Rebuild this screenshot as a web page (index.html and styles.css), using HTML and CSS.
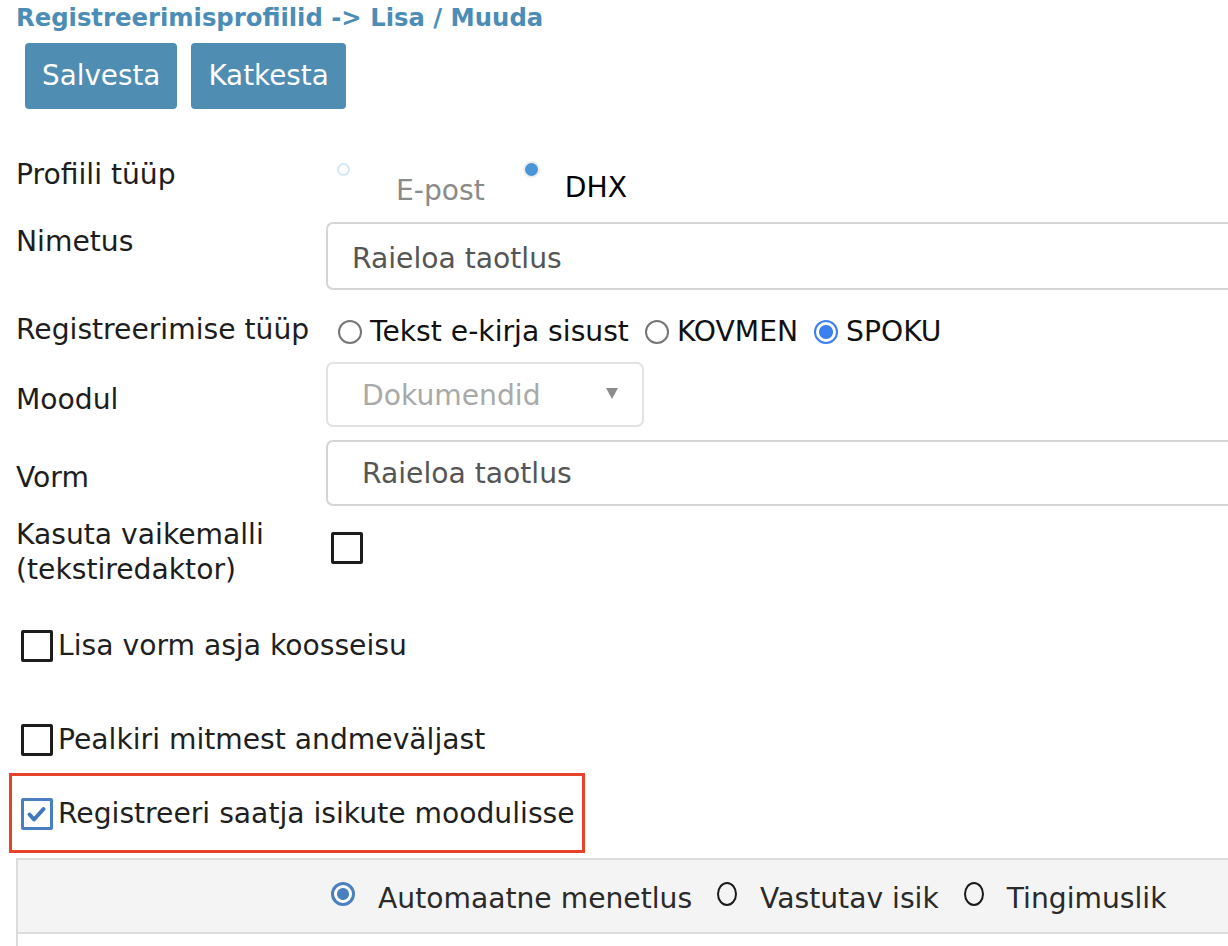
FILE: index.html
```html
<!DOCTYPE html>
<html lang="et">
<head>
<meta charset="utf-8">
<title>Registreerimisprofiilid</title>
<link rel="stylesheet" href="styles.css">
</head>
<body>
<div class="page">
  <h1 class="title">Registreerimisprofiilid -&gt; Lisa / Muuda</h1>
  <div class="actions">
    <button class="btn">Salvesta</button>
    <button class="btn">Katkesta</button>
  </div>

  <div class="row row-profile">
    <div class="label">Profiili tüüp</div>
    <div class="value profile-types">
      <div class="ptype ptype-epost">
        <span class="mini-radio"></span>
        <span class="ptype-text muted">E-post</span>
      </div>
      <div class="ptype ptype-dhx">
        <span class="mini-radio mini-radio-on"></span>
        <span class="ptype-text">DHX</span>
      </div>
    </div>
  </div>

  <div class="row row-name">
    <div class="label label-top">Nimetus</div>
    <div class="value">
      <div class="field field-name">Raieloa taotlus</div>
    </div>
  </div>

  <div class="row row-regtype">
    <div class="label">Registreerimise tüüp</div>
    <div class="value radios">
      <span class="radio"></span><span class="radio-text">Tekst e-kirja sisust</span>
      <span class="radio gap"></span><span class="radio-text">KOVMEN</span>
      <span class="radio radio-on gap"></span><span class="radio-text">SPOKU</span>
    </div>
  </div>

  <div class="row row-module">
    <div class="label label-mid">Moodul</div>
    <div class="value">
      <div class="select">
        <span class="select-text">Dokumendid</span>
        <span class="select-arrow"></span>
      </div>
    </div>
  </div>

  <div class="row row-form">
    <div class="label label-mid">Vorm</div>
    <div class="value">
      <div class="field field-form">Raieloa taotlus</div>
    </div>
  </div>

  <div class="row row-template">
    <div class="label">Kasuta vaikemalli (tekstiredaktor)</div>
    <div class="value">
      <span class="checkbox checkbox-inline"></span>
    </div>
  </div>

  <div class="check-row check-row-first">
    <span class="checkbox"></span><span class="check-text">Lisa vorm asja koosseisu</span>
  </div>

  <div class="check-row check-row-second">
    <span class="checkbox"></span><span class="check-text">Pealkiri mitmest andmeväljast</span>
  </div>

  <div class="highlight">
    <div class="check-row">
      <span class="checkbox checkbox-on">
        <svg width="26" height="26" viewBox="0 0 26 26"><path d="M5.5 13.5 L10 18.5 L19.5 8" fill="none" stroke="#3f78bd" stroke-width="4" stroke-linecap="round" stroke-linejoin="round"/></svg>
      </span><span class="check-text">Registreeri saatja isikute moodulisse</span>
    </div>
  </div>

  <div class="panel">
    <div class="panel-spacer"></div>
    <div class="panel-radios">
      <span class="pradio pradio-on"></span><span class="pradio-text">Automaatne menetlus</span>
      <span class="pradio"></span><span class="pradio-text">Vastutav isik</span>
      <span class="pradio"></span><span class="pradio-text">Tingimuslik</span>
    </div>
  </div>
  <div class="panel-body"></div>
</div>
</body>
</html>
```

FILE: styles.css
```css
html, body {
  margin: 0;
  padding: 0;
  background: #ffffff;
  overflow: hidden;
}

body {
  font-family: "DejaVu Sans", Verdana, sans-serif;
  font-size: 28.2px;
  line-height: 35px;
  color: #1d1d1d;
  width: 1228px;
  height: 946px;
}

.page {
  padding-left: 16px;
}

.title {
  margin: 0;
  padding-top: 4px;
  font-size: 24.3px;
  line-height: 28px;
  font-weight: bold;
  color: #4b8db6;
}

.actions {
  display: flex;
  gap: 14px;
  margin-top: 11px;
  padding-left: 9px;
}

.btn {
  height: 66px;
  padding: 0 17px;
  border: none;
  border-radius: 4px;
  background: #4f8db3;
  color: #ffffff;
  font-family: "DejaVu Sans", Verdana, sans-serif;
  font-size: 27.8px;
  line-height: 66px;
}

.row {
  display: grid;
  grid-template-columns: 310px 1fr;
  align-items: start;
}

.label {
  line-height: 35px;
  color: #1d1d1d;
}

.label-top {
  padding-top: 2px;
}

.label-mid {
  padding-top: 20px;
}

.value {
  min-width: 0;
}

/* Profile type */
.row-profile {
  margin-top: 48px;
}

.profile-types {
  display: flex;
  align-items: flex-start;
}

.ptype {
  display: flex;
  align-items: flex-start;
}

.ptype-epost {
  margin-left: 11px;
}

.ptype-dhx {
  margin-left: 40px;
}

.mini-radio {
  width: 13px;
  height: 13px;
  margin-top: 6px;
  box-sizing: border-box;
  border-radius: 50%;
  border: 2px solid #d3e6f6;
  background: #ffffff;
  flex: none;
}

.mini-radio-on {
  border: none;
  background: #4a95d6;
  box-shadow: 0 0 0 2px #eeeeee;
}

.ptype-epost .ptype-text {
  margin-left: 46px;
  padding-top: 16px;
}

.ptype-dhx .ptype-text {
  margin-left: 27px;
  padding-top: 13px;
  color: #000000;
}

.muted {
  color: #8a8a8a;
}

/* Inputs */
.row-name {
  margin-top: 14px;
}

.field {
  width: 940px;
  box-sizing: border-box;
  border: 2px solid #d4d4d4;
  border-radius: 7px;
  color: #555555;
  display: flex;
  align-items: center;
}

.field-name {
  height: 68px;
  padding-left: 24px;
  padding-top: 4px;
}

.field-form {
  height: 66px;
  padding-left: 34px;
}

/* Registration type radios */
.row-regtype {
  margin-top: 22px;
}

.radios {
  display: flex;
  align-items: center;
  padding-left: 12px;
  padding-top: 2px;
  color: #111111;
}

.radio {
  width: 24px;
  height: 24px;
  box-sizing: border-box;
  border-radius: 50%;
  border: 2px solid #767676;
  background: #ffffff;
  flex: none;
}

.radio.gap {
  margin-left: 16px;
}

.radio-on {
  border: 2px solid #3b7ff0;
  background: radial-gradient(circle, #3b7ff0 0 6.5px, #ffffff 7.5px);
}

.radio-text {
  margin-left: 8px;
}

/* Module select */
.row-module {
  margin-top: 13px;
}

.select {
  width: 318px;
  height: 65px;
  box-sizing: border-box;
  border: 2px solid #e2e2e2;
  border-radius: 7px;
  display: flex;
  align-items: center;
  justify-content: space-between;
  padding: 2px 24px 0 34px;
}

.select-text {
  color: #a9a9a9;
}

.select-arrow {
  width: 0;
  height: 0;
  border-left: 6px solid transparent;
  border-right: 6px solid transparent;
  border-top: 11px solid #8c8c8c;
  margin-bottom: 4px;
}

.row-form {
  margin-top: 13px;
}

/* Template checkbox row */
.row-template {
  margin-top: 11px;
}

.checkbox {
  width: 32px;
  height: 32px;
  box-sizing: border-box;
  border: 3px solid #1c1c1c;
  border-radius: 2px;
  background: #ffffff;
  display: inline-flex;
  align-items: center;
  justify-content: center;
  flex: none;
}

.checkbox-inline {
  margin-left: 5px;
  margin-top: 15px;
}

.checkbox-on {
  border-color: #4a7fbf;
}

.check-row {
  display: flex;
  align-items: center;
  padding-left: 5px;
  line-height: 35px;
  color: #1f1f1f;
}

.check-text {
  margin-left: 5px;
}

.check-row-first {
  margin-top: 41px;
}

.check-row-second {
  margin-top: 59px;
}

.highlight {
  margin-top: 16px;
  margin-left: -7px;
  width: fit-content;
  border: 3px solid #e6432a;
  padding: 20px 7px 19px 9px;
}

.highlight .check-row {
  padding-left: 0;
}

/* Bottom panel */
.panel {
  margin-top: 5px;
  height: 76px;
  box-sizing: border-box;
  background: #f4f4f4;
  border-top: 2px solid #dcdcdc;
  border-bottom: 2px solid #dcdcdc;
  border-left: 2px solid #dcdcdc;
  display: grid;
  grid-template-columns: 313px 1fr;
  align-items: center;
  padding-top: 4px;
}

.panel-radios {
  display: flex;
  align-items: center;
  color: #2a2a2a;
}

.pradio {
  width: 20px;
  height: 24px;
  box-sizing: border-box;
  border-radius: 50%;
  border: 2px solid #1a1a1a;
  flex: none;
  margin-left: 25px;
  margin-top: -8px;
}

.pradio-on {
  width: 24px;
  margin-left: 0;
  border: 3px solid #4a80c0;
  background: radial-gradient(circle, #4a80c0 0 5.5px, #ffffff 6.5px);
}

.pradio-text {
  margin-left: 23px;
}

.panel-body {
  height: 40px;
  border-left: 2px solid #dcdcdc;
}
```
